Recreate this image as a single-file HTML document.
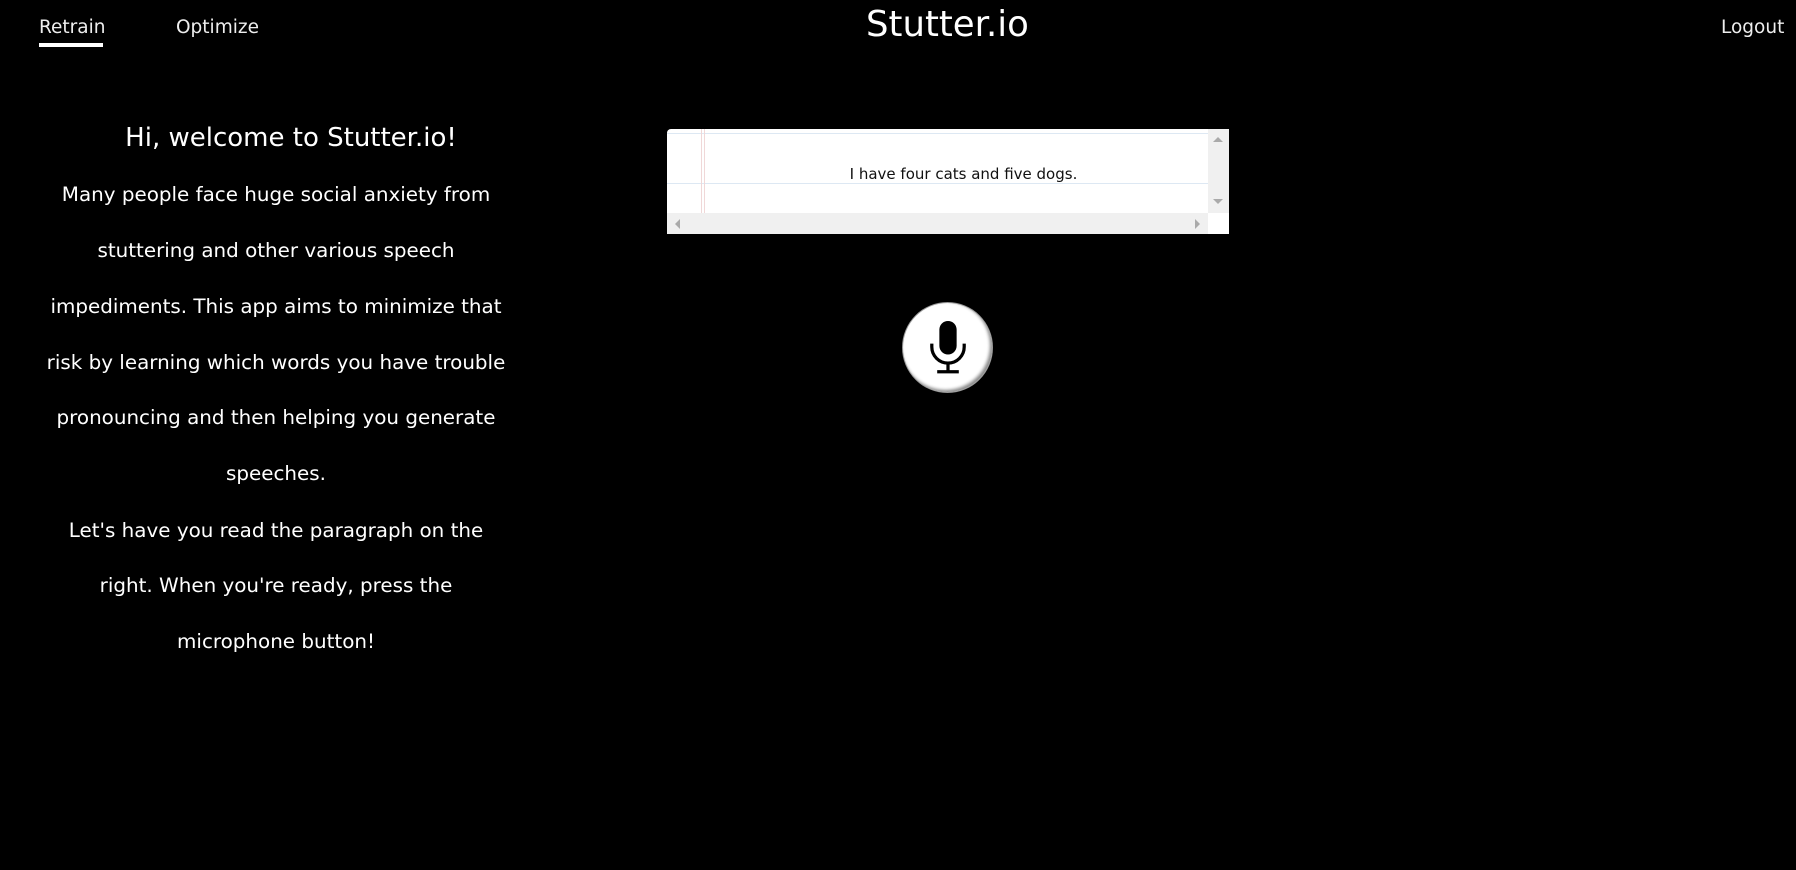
<!DOCTYPE html>
<html><head><style>
body{margin:0;width:1796px;height:870px;background:#000;overflow:hidden;font-family:"DejaVu Sans","Liberation Sans",sans-serif;color:#fff;position:relative}
.a{position:absolute;white-space:nowrap}
.nav{font-size:18.5px;color:#eee;top:17px}
.p{font-size:19.9px;left:0;width:552px;text-align:center}
</style></head><body>
<div class="a nav" style="left:39px">Retrain</div>
<div class="a" style="left:39px;top:43px;width:64px;height:4px;background:#fff"></div>
<div class="a nav" style="left:176px">Optimize</div>
<div class="a" style="left:866px;top:4px;font-size:35.5px;width:160px;text-align:center">Stutter.io</div>
<div class="a nav" style="left:1721px">Logout</div>

<div class="a p" style="top:123px;left:15px;font-size:26px">Hi, welcome to Stutter.io!</div>
<div class="a p" style="top:183px">Many people face huge social anxiety from</div>
<div class="a p" style="top:239px">stuttering and other various speech</div>
<div class="a p" style="top:295px">impediments. This app aims to minimize that</div>
<div class="a p" style="top:351px">risk by learning which words you have trouble</div>
<div class="a p" style="top:406px">pronouncing and then helping you generate</div>
<div class="a p" style="top:462px">speeches.</div>
<div class="a p" style="top:519px">Let's have you read the paragraph on the</div>
<div class="a p" style="top:574px">right. When you're ready, press the</div>
<div class="a p" style="top:630px">microphone button!</div>

<div class="a" style="left:667px;top:129px;width:562px;height:105px;background:#fff;border-radius:4px 0 0 0;overflow:hidden">
 <div class="a" style="left:0;top:4px;width:541px;height:1px;background:#dde8f3"></div>
 <div class="a" style="left:0;top:54px;width:541px;height:1px;background:#dde8f3"></div>
 <div class="a" style="left:34px;top:0;width:1px;height:84px;background:#f0d8d8"></div>
 <div class="a" style="left:37px;top:0;width:1px;height:84px;background:#f0d8d8"></div>
 <div class="a" style="left:26px;top:36px;width:541px;text-align:center;font-size:15px;color:#111">I have four cats and five dogs.</div>
 <div class="a" style="left:541px;top:0;width:21px;height:84px;background:#f0f0f0"></div>
 <div class="a" style="left:546px;top:8px;width:0;height:0;border:5px solid transparent;border-bottom-color:#aaa;border-top:0"></div>
 <div class="a" style="left:546px;top:70px;width:0;height:0;border:5px solid transparent;border-top-color:#aaa;border-bottom:0"></div>
 <div class="a" style="left:0;top:84px;width:541px;height:21px;background:#f0f0f0"></div>
 <div class="a" style="left:8px;top:90px;width:0;height:0;border:5px solid transparent;border-right-color:#aaa;border-left:0"></div>
 <div class="a" style="left:528px;top:90px;width:0;height:0;border:5px solid transparent;border-left-color:#aaa;border-right:0"></div>
</div>

<div class="a" style="left:903px;top:303px;width:89px;height:89px;border-radius:50%;background:#fff;box-shadow:inset -2px -2px 3px #888,0 0 0 1px #999"></div>
<svg class="a" style="left:921px;top:321px" width="54" height="54" viewBox="0 0 50 50">
 <rect x="17" y="0" width="16" height="31" rx="8" fill="#000"/>
 <path d="M10 21v3a15 15 0 0 0 30 0v-3" fill="none" stroke="#000" stroke-width="3"/>
 <path d="M25 39v7M15 47h20" stroke="#000" stroke-width="3"/>
</svg>
</body></html>
